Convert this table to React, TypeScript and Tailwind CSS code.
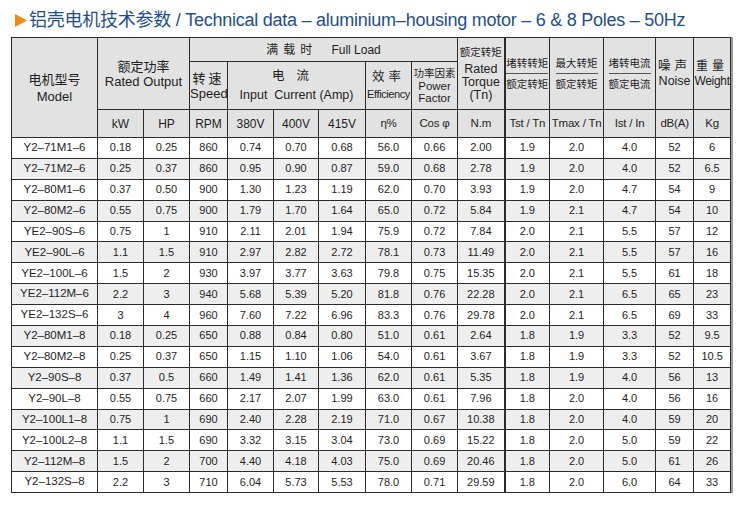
import React from 'react';

const rows: string[][] = [
    ['Y2–71M1–6', '0.18', '0.25', '860', '0.74', '0.70', '0.68', '56.0', '0.66', '2.00', '1.9', '2.0', '4.0', '52', '6'],
    ['Y2–71M2–6', '0.25', '0.37', '860', '0.95', '0.90', '0.87', '59.0', '0.68', '2.78', '1.9', '2.0', '4.0', '52', '6.5'],
    ['Y2–80M1–6', '0.37', '0.50', '900', '1.30', '1.23', '1.19', '62.0', '0.70', '3.93', '1.9', '2.0', '4.7', '54', '9'],
    ['Y2–80M2–6', '0.55', '0.75', '900', '1.79', '1.70', '1.64', '65.0', '0.72', '5.84', '1.9', '2.1', '4.7', '54', '10'],
    ['YE2–90S–6', '0.75', '1', '910', '2.11', '2.01', '1.94', '75.9', '0.72', '7.84', '2.0', '2.1', '5.5', '57', '12'],
    ['YE2–90L–6', '1.1', '1.5', '910', '2.97', '2.82', '2.72', '78.1', '0.73', '11.49', '2.0', '2.1', '5.5', '57', '16'],
    ['YE2–100L–6', '1.5', '2', '930', '3.97', '3.77', '3.63', '79.8', '0.75', '15.35', '2.0', '2.1', '5.5', '61', '18'],
    ['YE2–112M–6', '2.2', '3', '940', '5.68', '5.39', '5.20', '81.8', '0.76', '22.28', '2.0', '2.1', '6.5', '65', '23'],
    ['YE2–132S–6', '3', '4', '960', '7.60', '7.22', '6.96', '83.3', '0.76', '29.78', '2.0', '2.1', '6.5', '69', '33'],
    ['Y2–80M1–8', '0.18', '0.25', '650', '0.88', '0.84', '0.80', '51.0', '0.61', '2.64', '1.8', '1.9', '3.3', '52', '9.5'],
    ['Y2–80M2–8', '0.25', '0.37', '650', '1.15', '1.10', '1.06', '54.0', '0.61', '3.67', '1.8', '1.9', '3.3', '52', '10.5'],
    ['Y2–90S–8', '0.37', '0.5', '660', '1.49', '1.41', '1.36', '62.0', '0.61', '5.35', '1.8', '1.9', '4.0', '56', '13'],
    ['Y2–90L–8', '0.55', '0.75', '660', '2.17', '2.07', '1.99', '63.0', '0.61', '7.96', '1.8', '2.0', '4.0', '56', '16'],
    ['Y2–100L1–8', '0.75', '1', '690', '2.40', '2.28', '2.19', '71.0', '0.67', '10.38', '1.8', '2.0', '4.0', '59', '20'],
    ['Y2–100L2–8', '1.1', '1.5', '690', '3.32', '3.15', '3.04', '73.0', '0.69', '15.22', '1.8', '2.0', '5.0', '59', '22'],
    ['Y2–112M–8', '1.5', '2', '700', '4.40', '4.18', '4.03', '75.0', '0.69', '20.46', '1.8', '2.0', '5.0', '61', '26'],
    ['Y2–132S–8', '2.2', '3', '710', '6.04', '5.73', '5.53', '78.0', '0.71', '29.59', '1.8', '2.0', '6.0', '64', '33'],
];

const colWidths = [
    'w-[86px]', 'w-[46px]', 'w-[46px]', 'w-[38px]', 'w-[46px]', 'w-[45px]', 'w-[47px]', 'w-[46px]',
    'w-[46px]', 'w-[47px]', 'w-[45px]', 'w-[54px]', 'w-[52px]', 'w-[38px]', 'w-[37px]',
];

const units = ['kW', 'HP', 'RPM', '380V', '400V', '415V', 'η%', 'Cos φ', 'N.m', 'Tst / Tn', 'Tmax / Tn', 'Ist / In', 'dB(A)', 'Kg'];

const cell = 'border border-[#2b2b2b] p-0 text-center align-middle whitespace-nowrap';
const head = `${cell} bg-[#e2e2e2] font-normal`;

function Ratio({ top, bottom }: { top: string; bottom: string }) {
    return (
        <div className="flex flex-col items-center text-[10.5px] leading-[14px]">
            <span>{top}</span>
            <span className="my-[3px] h-px w-[42px] bg-[#555]" />
            <span>{bottom}</span>
        </div>
    );
}

export default function App() {
    return (
        <div
            className="w-[750px] h-[513px] bg-white text-[#1e1e1e]"
            style={{ fontFamily: '"Liberation Sans", "Noto Sans CJK SC", sans-serif' }}
        >
            <div className="flex h-[37px] items-center pl-[15px] pt-[3px]">
                <svg width="12" height="13" viewBox="0 0 12 13" className="mr-[2px]">
                    <polygon points="0,0 12,6.5 0,13" fill="#ee8a12" />
                </svg>
                <span className="text-[18px] leading-none tracking-[-0.25px] text-[#1f4e8c]">
                    铝壳电机技术参数 / Technical data – aluminium–housing motor – 6 &amp; 8 Poles – 50Hz
                </span>
            </div>

            <table className="ml-[11px] w-[719px] table-fixed border-collapse shadow-[2px_0_0_#9c9c9c]">
                <colgroup>
                    {colWidths.map((w, i) => (
                        <col key={i} className={w} />
                    ))}
                </colgroup>
                <thead>
                    <tr className="h-[24px]">
                        <th rowSpan={3} className={`${head} text-[13px] leading-[17px]`}>
                            电机型号
                            <br />
                            Model
                        </th>
                        <th rowSpan={2} colSpan={2} className={`${head} text-[13px] leading-[15px]`}>
                            额定功率
                            <br />
                            Rated Output
                        </th>
                        <th colSpan={6} className={`${head} text-[12px] leading-none`}>
                            <span className="tracking-[5px]">满载时</span>
                            <span className="ml-[14px]">Full Load</span>
                        </th>
                        <th rowSpan={2} className={`${head} text-[12.5px] leading-[13px]`}>
                            <div className="text-[10.5px] leading-[15px]">额定转矩</div>
                            <div className="mt-[3px]">Rated</div>
                            <div>Torque</div>
                            <div>(Tn)</div>
                        </th>
                        <th rowSpan={2} className={`${head} border-l-2`}>
                            <Ratio top="堵转转矩" bottom="额定转矩" />
                        </th>
                        <th rowSpan={2} className={head}>
                            <Ratio top="最大转矩" bottom="额定转矩" />
                        </th>
                        <th rowSpan={2} className={head}>
                            <Ratio top="堵转电流" bottom="额定电流" />
                        </th>
                        <th rowSpan={2} className={`${head} text-[12.5px] leading-[15px]`}>
                            <span className="tracking-[4px]">噪声</span>
                            <br />
                            Noise
                        </th>
                        <th rowSpan={2} className={`${head} text-[12px] leading-[15px]`}>
                            <span className="tracking-[4px]">重量</span>
                            <br />
                            <span className="tracking-[-0.3px]">Weight</span>
                        </th>
                    </tr>
                    <tr className="h-[48px]">
                        <th className={`${head} text-[13px] leading-[15px]`}>
                            <span className="tracking-[3px]">转速</span>
                            <br />
                            Speed
                        </th>
                        <th colSpan={3} className={`${head} text-[12.5px] leading-[19px]`}>
                            <span className="tracking-[12px]">电流</span>
                            <br />
                            Input&nbsp; Current (Amp)
                        </th>
                        <th className={`${head} text-[12.5px] leading-[17px]`}>
                            <span className="tracking-[4px]">效率</span>
                            <br />
                            <span className="text-[11px] tracking-[-0.4px]">Efficiency</span>
                        </th>
                        <th className={`${head} text-[11.5px] leading-[12px]`}>
                            <div className="text-[10.5px] leading-[13px]">功率因素</div>
                            <div>Power</div>
                            <div>Factor</div>
                        </th>
                    </tr>
                    <tr className="h-[28px]">
                        {units.map((u, i) => (
                            <th
                                key={u}
                                className={`${head} ${i < 6 ? 'font-bold text-[12px]' : 'text-[11.5px] tracking-[-0.2px]'} ${i === 9 ? 'border-l-2' : ''}`}
                            >
                                {u}
                            </th>
                        ))}
                    </tr>
                </thead>
                <tbody>
                    {rows.map((r, ri) => (
                        <tr key={r[0]} className={`h-[20.9px] ${ri % 2 === 1 ? 'bg-[#eeeeee]' : 'bg-white'}`}>
                            {r.map((v, ci) => (
                                <td
                                    key={ci}
                                    className={`${cell} leading-none ${ci === 0 ? 'text-[11.5px]' : 'text-[11px]'} ${ci === 10 ? 'border-l-2' : ''}`}
                                >
                                    {v}
                                </td>
                            ))}
                        </tr>
                    ))}
                </tbody>
            </table>
        </div>
    );
}
